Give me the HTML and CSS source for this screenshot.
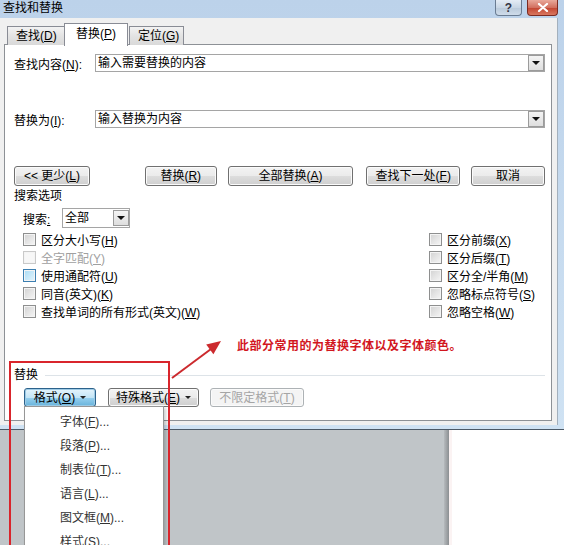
FILE: index.html
```
<!DOCTYPE html>
<html lang="zh-CN">
<head>
    <meta charset="UTF-8">
    <title>查找和替换</title>
    <link rel="stylesheet" href="styles.css">
</head>
<body>
<div class="screen">
    <div class="dialog">
        <div class="titlebar">
            <span class="title">查找和替换</span>
            <div class="caption-btns">
                <span class="cap-btn help">?</span>
                <span class="cap-btn close">
                    <svg width="12" height="9" viewBox="0 0 12 9"><path d="M2 1 L10 8 M10 1 L2 8" stroke="#fff" stroke-width="2.2" stroke-linecap="round"/></svg>
                </span>
            </div>
        </div>
        <div class="client">
            <div class="tabs">
                <div class="tab">查找(<u>D</u>)</div>
                <div class="tab active">替换(<u>P</u>)</div>
                <div class="tab">定位(<u>G</u>)</div>
            </div>
            <div class="panel">
                <div class="field-row">
                    <span class="field-label">查找内容(<u>N</u>):</span>
                    <div class="combo"><span class="combo-text">输入需要替换的内容</span><span class="drop-btn"></span></div>
                </div>
                <div class="field-row row-gap">
                    <span class="field-label">替换为(<u>I</u>):</span>
                    <div class="combo"><span class="combo-text">输入替换为内容</span><span class="drop-btn"></span></div>
                </div>
                <div class="btn-row row-gap">
                    <span class="btn btn-less"><span>&lt;&lt; 更少(<u>L</u>)</span></span>
                    <span class="btn btn-replace"><span>替换(<u>R</u>)</span></span>
                    <span class="btn btn-all"><span>全部替换(<u>A</u>)</span></span>
                    <span class="btn btn-next"><span>查找下一处(<u>F</u>)</span></span>
                    <span class="btn btn-cancel"><span>取消</span></span>
                </div>
                <div class="group-title">搜索选项</div>
                <div class="search-row">
                    <span class="search-label">搜索<u>:</u></span>
                    <div class="select"><span class="combo-text">全部</span><span class="drop-btn"></span></div>
                </div>
                <div class="options">
                    <div class="option"><span class="cb"></span><span>区分大小写(<u>H</u>)</span></div>
                    <div class="option disabled"><span class="cb"></span><span>全字匹配(<u>Y</u>)</span></div>
                    <div class="option"><span class="cb hover"></span><span>使用通配符(<u>U</u>)</span></div>
                    <div class="option"><span class="cb"></span><span>同音(英文)(<u>K</u>)</span></div>
                    <div class="option"><span class="cb"></span><span>查找单词的所有形式(英文)(<u>W</u>)</span></div>
                    <div class="option"><span class="cb"></span><span>区分前缀(<u>X</u>)</span></div>
                    <div class="option"><span class="cb"></span><span>区分后缀(<u>T</u>)</span></div>
                    <div class="option"><span class="cb"></span><span>区分全/半角(<u>M</u>)</span></div>
                    <div class="option"><span class="cb"></span><span>忽略标点符号(<u>S</u>)</span></div>
                    <div class="option"><span class="cb"></span><span>忽略空格(<u>W</u>)</span></div>
                </div>
                <div class="section-title"><span>替换</span><span class="rule"></span></div>
                <div class="btn-row format-row">
                    <span class="btn btn-format pressed"><span>格式(<u>O</u>)</span><span class="caret"></span></span>
                    <span class="btn btn-special"><span>特殊格式(<u>E</u>)</span><span class="caret"></span></span>
                    <span class="btn btn-nolimit disabled"><span>不限定格式(<u>T</u>)</span></span>
                </div>
            </div>
        </div>
    </div>
    <div class="desk">
        <div class="desk-grey"></div>
        <div class="desk-shadow"></div>
        <div class="desk-white"></div>
    </div>

    <svg class="arrow" width="62" height="48" viewBox="0 0 62 48">
        <line x1="7" y1="43" x2="46" y2="14" stroke="#cc2a2e" stroke-width="2"/>
        <polygon points="56,6 48.4,19.2 41.2,9.6" fill="#cc2a2e"/>
    </svg>
    <div class="note">此部分常用的为替换字体以及字体颜色。</div>

    <div class="menu">
        <div class="menu-item">字体(<u>F</u>)...</div>
        <div class="menu-item">段落(<u>P</u>)...</div>
        <div class="menu-item">制表位(<u>T</u>)...</div>
        <div class="menu-item">语言(<u>L</u>)...</div>
        <div class="menu-item">图文框(<u>M</u>)...</div>
        <div class="menu-item">样式(<u>S</u>)...</div>
    </div>
    <div class="mark-box"></div>
</div>
</body>
</html>
```

FILE: styles.css
```
*{
    margin: 0;
    padding: 0;
    box-sizing: border-box;
}
body{
    font-family: "Liberation Sans", "Noto Sans CJK SC", sans-serif;
    font-size: 12px;
    color: #000;
}
u{
    text-underline-offset: 1px;
}
.screen{
    width: 564px;
    height: 545px;
    position: relative;
    overflow: hidden;
    background: #fff;
}

/* window */
.dialog{
    height: 430px;
    display: flex;
    flex-direction: column;
    padding: 0 6px 4px 0;
    border-bottom: 1px solid #4b5967;
    background: linear-gradient(#bcd2ea, #cfe2f3);
}
.titlebar{
    height: 18px;
    display: flex;
    justify-content: space-between;
    align-items: flex-start;
    padding-left: 3px;
}
.title{
    line-height: 17px;
    font-size: 12px;
}
.caption-btns{
    display: flex;
    gap: 5px;
}
.cap-btn{
    height: 16px;
    display: flex;
    align-items: center;
    justify-content: center;
    border: 1px solid #6a7c92;
    border-top: none;
    border-radius: 0 0 4px 4px;
}
.help{
    width: 27px;
    background: linear-gradient(#e4ecf5, #c9d6e4 50%, #b9c9da 51%, #cfdcea);
    color: #334;
    font-weight: bold;
    font-size: 12px;
}
.close{
    width: 31px;
    border-color: #7c2b22;
    background: linear-gradient(#e9a99b, #d2705f 50%, #c24430 51%, #d9775f);
}
.client{
    flex: 1;
    display: flex;
    flex-direction: column;
    padding: 5px 5px 4px 4px;
    background: #f0f0f0;
    border-right: 1px solid #a3b0bd;
}

/* tabs */
.tabs{
    display: flex;
    align-items: flex-end;
    height: 22px;
    padding-left: 3px;
    position: relative;
    z-index: 1;
}
.tab{
    height: 19px;
    line-height: 18px;
    padding: 0 8px;
    border: 1px solid #898c95;
    border-bottom: none;
    background: linear-gradient(#f3f3f3, #e3e3e3 50%, #d9d9d9);
    white-space: nowrap;
}
.tab:first-child{
    width: 57px;
    border-right: none;
}
.tab.active{
    width: 64px;
    height: 23px;
    line-height: 21px;
    padding-left: 11px;
    margin-bottom: -1px;
    background: #fff;
}
.tab:last-child{
    width: 55px;
    margin-left: 1px;
}
.panel{
    flex: 1;
    margin-top: -1px;
    border: 1px solid #8d9196;
    background: #fff;
    padding: 9px 6px 0 9px;
}

/* fields */
.field-row{
    height: 18px;
    display: flex;
    align-items: center;
}
.row-gap{
    margin-top: 38px;
}
.field-label{
    width: 81px;
    white-space: nowrap;
}
.combo,
.select{
    flex: 1;
    height: 18px;
    display: flex;
    align-items: center;
    justify-content: space-between;
    border: 1px solid #a5a5a5;
    background: #fff;
    padding-left: 2px;
}
.combo-text{
    line-height: 16px;
}
.drop-btn{
    width: 16px;
    height: 16px;
    display: flex;
    align-items: center;
    justify-content: center;
    border: 1px solid #9b9b9b;
    background: linear-gradient(#f4f4f4, #dedede);
}
.drop-btn::after{
    content: "";
    border-left: 4px solid transparent;
    border-right: 4px solid transparent;
    border-top: 4px solid #111;
}

/* buttons */
.btn-row{
    display: flex;
    height: 20px;
}
.btn{
    height: 20px;
    display: flex;
    align-items: center;
    justify-content: center;
    border: 1px solid #707070;
    border-radius: 3px;
    background: linear-gradient(#f3f3f3, #ebebeb 50%, #dddddd 51%, #cfcfcf);
    box-shadow: inset 0 0 0 1px #fbfbfb;
    white-space: nowrap;
    line-height: 16px;
}
.btn-less{ width: 76px; }
.btn-replace{ width: 72px; margin-left: 55px; }
.btn-all{ width: 126px; margin-left: 11px; }
.btn-next{ width: 94px; margin-left: 13px; }
.btn-cancel{ width: 74px; margin-left: 11px; }

.group-title{
    margin-top: 3px;
    line-height: 14px;
}
.search-row{
    margin-top: 5px;
    height: 20px;
    display: flex;
    align-items: center;
    padding-left: 9px;
}
.search-label{
    width: 39px;
}
.select{
    flex: none;
    width: 68px;
    height: 20px;
}

/* check options */
.options{
    margin-top: 2px;
    display: grid;
    grid-template-columns: 406px 1fr;
    grid-template-rows: repeat(5, 18px);
    grid-auto-flow: column;
    padding-left: 9px;
}
.option{
    display: flex;
    align-items: center;
    gap: 5px;
    white-space: nowrap;
}
.cb{
    width: 13px;
    height: 13px;
    border: 1px solid #8e8f8f;
    box-shadow: inset 0 0 0 1px #f4f4f4;
    background: linear-gradient(135deg, #d2d2d2, #f6f6f6);
}
.cb.hover{
    border-color: #3c7fb1;
    background: linear-gradient(135deg, #a9dcf5, #e4f4fc);
}
.option.disabled{
    color: #a0a0a0;
}
.option.disabled .cb{
    border-color: #c9c9c9;
    background: #f7f7f7;
}

.section-title{
    margin-top: 48px;
    display: flex;
    align-items: center;
    line-height: 14px;
}
.rule{
    flex: 1;
    margin-left: 7px;
    border-top: 1px solid #dde3e8;
}
.format-row{
    margin-top: 6px;
    height: 19px;
    padding-left: 10px;
}
.format-row .btn{
    height: 19px;
    gap: 5px;
}
.btn-format{ width: 72px; }
.btn-special{ width: 91px; margin-left: 12px; }
.btn-nolimit{ width: 94px; margin-left: 11px; }
.btn.pressed{
    border-color: #2c628b;
    background: linear-gradient(#e5f4fc, #c4e5f6 50%, #98d1ef 51%, #68b3db);
    box-shadow: inset 0 0 0 1px #9ecbe6;
}
.btn.disabled{
    color: #a5a5a5;
    border-color: #adb2b5;
    background: #f4f4f4;
}
.caret{
    border-left: 3px solid transparent;
    border-right: 3px solid transparent;
    border-top: 3px solid #222;
}

/* what lies under the dialog */
.desk{
    height: 115px;
    display: flex;
}
.desk-grey{
    width: 444px;
    background: #c0c5c8;
}
.desk-shadow{
    width: 5px;
    background: linear-gradient(90deg, #b5b9bc, #8b8f92);
}
.desk-white{
    flex: 1;
    background: #fff;
    border-left: 3px solid #fbf3f3;
}

/* annotation */
.arrow{
    position: absolute;
    left: 165px;
    top: 335px;
}
.note{
    position: absolute;
    left: 237px;
    top: 338px;
    color: #d2161e;
    font-weight: bold;
    font-size: 12px;
    letter-spacing: 0.5px;
    line-height: 16px;
}
.menu{
    position: absolute;
    left: 24px;
    top: 406px;
    width: 140px;
    height: 150px;
    padding-top: 3px;
    background: #fff;
    border: 1px solid #979797;
    box-shadow: 2px 2px 3px rgba(0,0,0,0.2);
    z-index: 2;
}
.menu-item{
    height: 24px;
    line-height: 24px;
    padding-left: 35px;
    color: #333;
}
.mark-box{
    position: absolute;
    left: 9px;
    top: 361px;
    width: 161px;
    height: 200px;
    border: 2px solid #d9252c;
    z-index: 3;
}
```
